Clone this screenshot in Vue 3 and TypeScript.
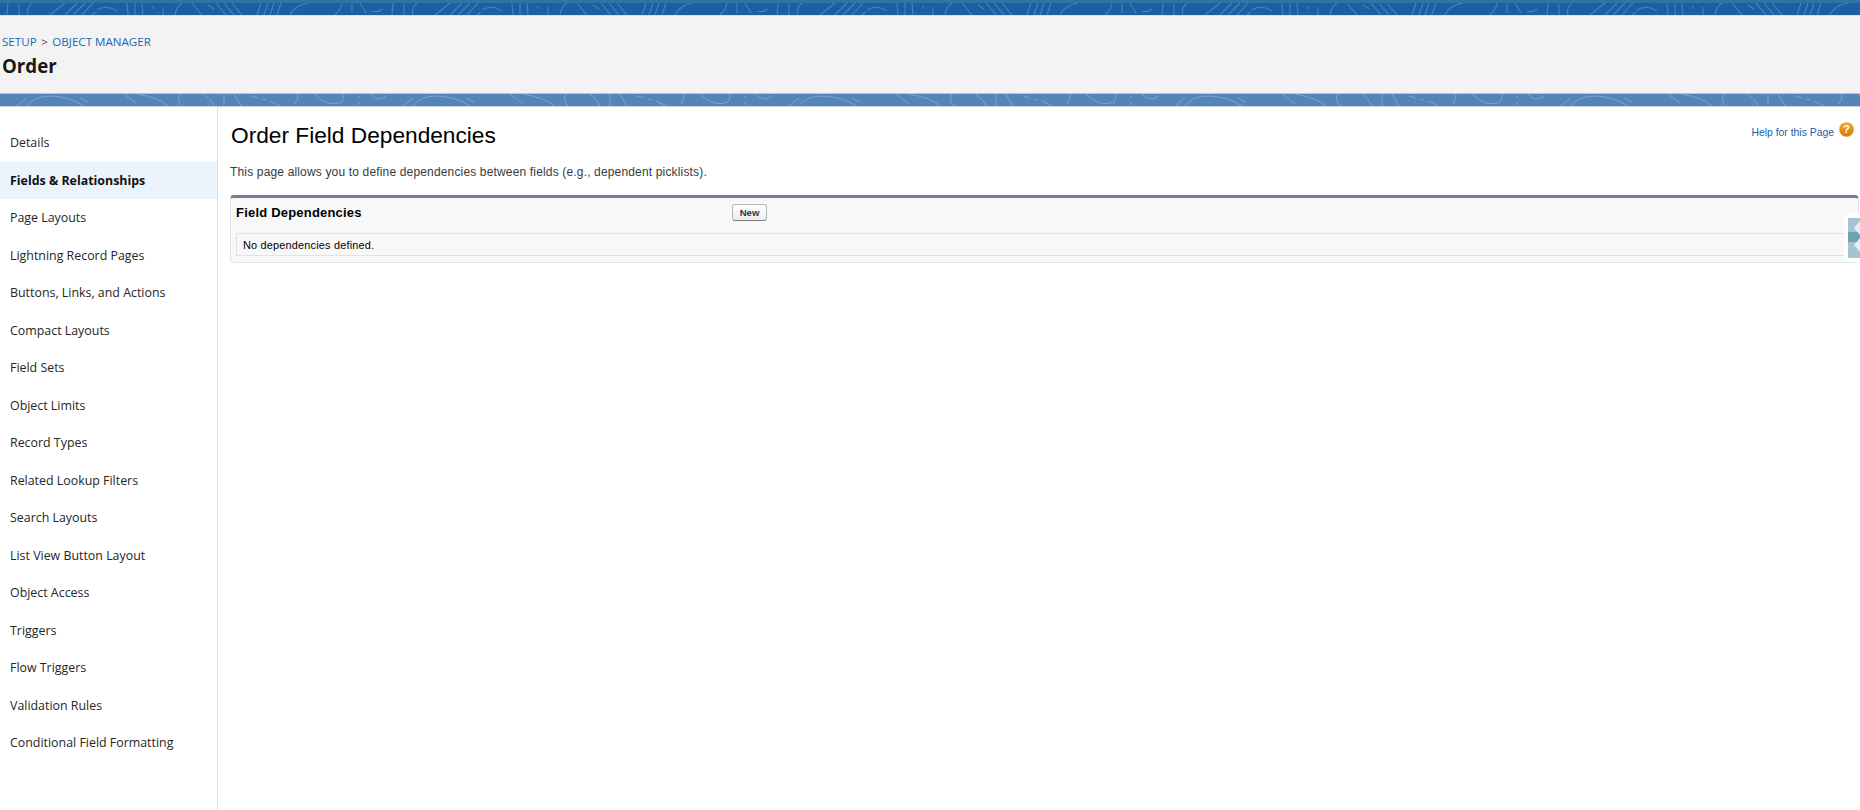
<script setup lang="ts">
const navItems = [
  'Details',
  'Fields & Relationships',
  'Page Layouts',
  'Lightning Record Pages',
  'Buttons, Links, and Actions',
  'Compact Layouts',
  'Field Sets',
  'Object Limits',
  'Record Types',
  'Related Lookup Filters',
  'Search Layouts',
  'List View Button Layout',
  'Object Access',
  'Triggers',
  'Flow Triggers',
  'Validation Rules',
  'Conditional Field Formatting'
];
const activeItem = 'Fields & Relationships';

// header textures, one tile each, traced from the reference
const topLines = [
  'M7 12 L8 0', 'M19 12 L19 1', 'M28 12 Q26 5 32 0',
  'M50 12 L65 0', 'M65 12 L77 0', 'M73 12 L85 0', 'M82 12 L93 0', 'M92 12 L96 9',
  'M97 7 Q106 1 117 8', 'M127 0 L128 12', 'M135 0 L135 12', 'M142 0 L143 12',
  'M153 3 L153 6', 'M163 4 L163 12', 'M175 12 Q176 4 182 0',
  'M192 0 L202 12', 'M208 2 L214 6', 'M216 0 L226 12', 'M224 0 L234 12', 'M232 0 L242 12',
  'M257 12 L261 0', 'M264 12 L268 0', 'M270 12 L274 0', 'M277 12 L281 0',
  'M290 12 Q295 2 308 0', 'M342 0 Q341 7 335 12', 'M352 0 L352 10', 'M360 0 L366 10',
  'M372 8 Q378 10 382 6'
];
const subLines = [
  'M17 12 L27 4', 'M27 12 Q34 2 51 2 Q71 3 84 12', 'M80 4 L88 8',
  'M124 0 L137 10', 'M137 0 Q160 4 168 12', 'M180 0 Q176 6 182 12',
  'M204 0 Q212 6 214 12', 'M224 0 L224 12', 'M234 0 L241 12',
  'M251 2 L258 4', 'M262 5 L266 6', 'M270 7 L280 12', 'M298 0 Q298 6 295 10',
  'M314 0 Q328 14 342 8 Q344 5 344 0', 'M359 2 L359 4', 'M359 8 L359 11',
  'M370 0 Q378 9 386 2'
];
</script>

<template>
  <div class="page">
    <div class="band band-top">
      <svg class="texture" width="100%" height="100%">
        <defs>
          <pattern id="texture-top" width="385" height="12" patternUnits="userSpaceOnUse">
            <path v-for="d in topLines" :key="d" :d="d" fill="none" stroke="#5f90c2" stroke-width="1.1" opacity="0.7" />
          </pattern>
        </defs>
        <rect width="100%" height="100%" fill="url(#texture-top)" />
      </svg>
    </div>

    <header class="object-header">
      <div class="crumbs">
        <a class="crumb">SETUP</a>
        <span class="crumb-sep">&gt;</span>
        <a class="crumb">OBJECT MANAGER</a>
      </div>
      <h1 class="object-name">Order</h1>
    </header>

    <div class="band band-sub">
      <svg class="texture" width="100%" height="100%">
        <defs>
          <pattern id="texture-sub" width="386" height="12" patternUnits="userSpaceOnUse">
            <path v-for="d in subLines" :key="d" :d="d" fill="none" stroke="#86a9d0" stroke-width="1" opacity="0.8" />
          </pattern>
        </defs>
        <rect width="100%" height="100%" fill="url(#texture-sub)" />
      </svg>
    </div>

    <div class="body">
      <nav class="sidebar">
        <a
          v-for="item in navItems"
          :key="item"
          class="nav-item"
          :class="{ active: item === activeItem }"
        >{{ item }}</a>
      </nav>

      <main class="content">
        <div class="title-row">
          <h2 class="page-title">Order Field Dependencies</h2>
          <div class="help">
            <a class="help-link">Help for this Page</a>
            <svg class="help-icon" width="15" height="15" viewBox="0 0 16 16">
              <defs>
                <linearGradient id="help-fill" x1="0" y1="0" x2="0" y2="1">
                  <stop offset="0" stop-color="#f3a82c" />
                  <stop offset="1" stop-color="#d67a08" />
                </linearGradient>
              </defs>
              <circle cx="8" cy="8" r="7.8" fill="url(#help-fill)" />
              <text x="8" y="12" text-anchor="middle" class="help-mark">?</text>
            </svg>
          </div>
        </div>
        <p class="intro">This page allows you to define dependencies between fields (e.g., dependent picklists).</p>

        <section class="panel">
          <div class="panel-head">
            <h3 class="panel-title">Field Dependencies</h3>
            <button class="btn" type="button">New</button>
          </div>
          <div class="panel-body">No dependencies defined.</div>
        </section>
      </main>
    </div>

    <!-- collapsed side tabs sitting over the panel edge -->
    <div class="side-tabs">
      <div class="side-tabs-inner">
        <span class="tab-arrow tab-arrow-up"></span>
        <span class="tab-arrow tab-arrow-down"></span>
      </div>
    </div>
  </div>
</template>

<style>
html,
body {
  margin: 0;
  background: #fff;
}
</style>

<style scoped>
.page {
  position: relative;
  width: 1860px;
  height: 810px;
  overflow: hidden;
  display: flex;
  flex-direction: column;
  background: #fff;
  font-family: "Liberation Sans", Arial, sans-serif;
}

.band {
  flex: none;
  box-sizing: border-box;
}
.texture {
  display: block;
}
.band-top {
  height: 15px;
  background: #1c5fa3;
  border-top: 3px solid #2b76a3;
}
.band-sub {
  height: 13px;
  background: #5584b8;
  border-bottom: 1px solid #c9d2dc;
}

.object-header {
  flex: none;
  box-sizing: border-box;
  height: 79px;
  padding: 18px 2px 0;
  background: #f3f3f3;
  border-top: 1px solid #e0e0e0;
  border-bottom: 1px solid #c4c4c4;
}
.crumbs {
  display: flex;
  gap: 4.5px;
  font-family: "Open Sans", "Noto Sans", sans-serif;
  font-size: 11.6px;
  line-height: 16px;
  color: #444;
}
.crumb {
  color: #1b68b5;
}
.object-name {
  margin: 3px 0 0;
  font-family: "Open Sans", "Noto Sans", sans-serif;
  font-size: 18.7px;
  line-height: 26px;
  font-weight: 700;
  color: #181818;
}

.body {
  flex: 1;
  display: flex;
  min-height: 0;
}

.sidebar {
  flex: none;
  box-sizing: border-box;
  width: 218px;
  padding-top: 17px;
  border-right: 1px solid #dddfe2;
  display: flex;
  flex-direction: column;
  font-family: "Open Sans", "Noto Sans", sans-serif;
}
.nav-item {
  display: block;
  flex: none;
  height: 37.5px;
  line-height: 37px;
  padding-left: 10px;
  font-size: 12.4px;
  color: #262626;
}
.nav-item.active {
  background: #ebf3fc;
  font-weight: 700;
  color: #111;
}

.content {
  flex: 1;
  min-width: 0;
  padding: 0 1px 0 12px;
}
.title-row {
  display: flex;
  justify-content: space-between;
  align-items: flex-start;
  height: 58px;
}
.page-title {
  margin: 14px 0 0 1px;
  font-size: 22.7px;
  line-height: 28px;
  font-weight: 400;
  color: #000;
}
.help {
  display: flex;
  align-items: flex-start;
  gap: 5px;
  margin: 15px 5px 0 0;
}
.help-link {
  margin-top: 5px;
  font-size: 10.4px;
  line-height: 12px;
  color: #1a5e9f;
}
.help-icon {
  display: block;
}
.help-mark {
  font-family: "Liberation Sans", Arial, sans-serif;
  font-size: 12px;
  font-weight: 700;
  fill: #fff;
}
.intro {
  margin: 0;
  font-size: 12px;
  line-height: 14px;
  letter-spacing: 0.16px;
  color: #3a3a3a;
}

.panel {
  box-sizing: border-box;
  margin-top: 16px;
  height: 68px;
  background: #f8f8f8;
  border: 1px solid #e0e3e5;
  border-top: 3px solid #747e96;
  border-radius: 4px;
}
.panel-head {
  box-sizing: border-box;
  display: flex;
  align-items: center;
  height: 35px;
  padding: 0 0 7px 5px;
}
.panel-title {
  width: 497px;
  margin: 0;
  font-size: 13px;
  letter-spacing: 0.2px;
  font-weight: 700;
  color: #000;
}
.btn {
  box-sizing: border-box;
  height: 17px;
  width: 35px;
  margin-left: -1px;
  padding: 0;
  font-family: inherit;
  font-size: 9.6px;
  font-weight: 700;
  color: #333;
  background: linear-gradient(#fff, #ececec);
  border: 1px solid #b5b5b5;
  border-bottom-color: #7f7f7f;
  border-radius: 3px;
}
.panel-body {
  box-sizing: border-box;
  height: 23px;
  margin-left: 5px;
  padding-left: 6px;
  line-height: 22px;
  font-size: 10.9px;
  letter-spacing: 0.2px;
  color: #000;
  border-top: 1px solid #e0e3e5;
  border-bottom: 1px solid #e0e3e5;
  border-left: 1px solid #e0e3e5;
}

.side-tabs {
  position: absolute;
  top: 213px;
  right: 0;
  width: 16px;
  height: 49px;
  padding: 5px 0 4px 4px;
  box-sizing: border-box;
  background: #fff;
  border-radius: 6px 0 0 6px;
}
.side-tabs-inner {
  position: relative;
  height: 100%;
  overflow: hidden;
  background: linear-gradient(#a3c4d0 0 14px, #6fa3b4 14px 24px, #a3c4d0 24px);
}
.tab-arrow {
  position: absolute;
  right: 0;
  width: 0;
  height: 0;
  border-top: 7px solid transparent;
  border-bottom: 7px solid transparent;
  border-right: 6px solid #e6eef1;
}
.tab-arrow-up {
  top: 3px;
}
.tab-arrow-down {
  top: 20px;
}
</style>
